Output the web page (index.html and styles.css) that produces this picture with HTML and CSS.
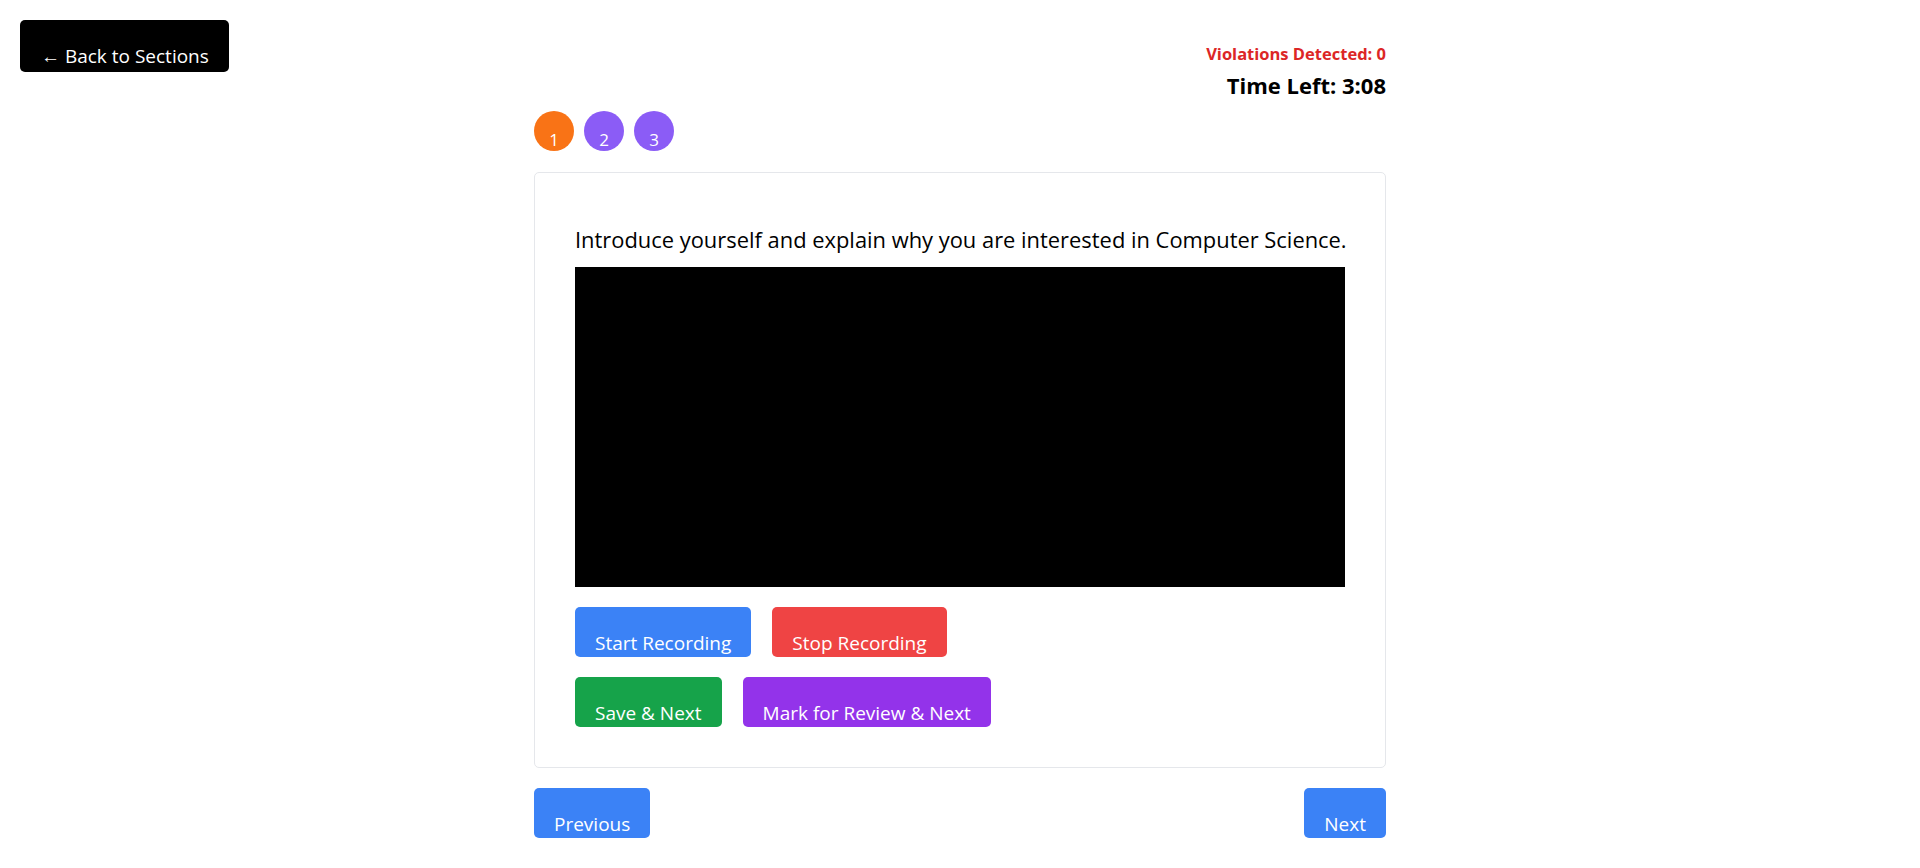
FILE: index.html
```html
<!DOCTYPE html>
<html lang="en">
<head>
<meta charset="utf-8">
<title>Interview Section</title>
<link rel="stylesheet" href="styles.css">
</head>
<body>
<div class="page">
  <div class="side">
    <button class="btn btn-back">← Back to Sections</button>
  </div>
  <main class="main">
    <div class="status">
      <div class="violations">Violations Detected: 0</div>
      <div class="timer">Time Left: 3:08</div>
    </div>
    <div class="steps">
      <span class="step step-active">1</span>
      <span class="step">2</span>
      <span class="step">3</span>
    </div>
    <section class="card">
      <h2 class="question">Introduce yourself and explain why you are interested in Computer Science.</h2>
      <div class="video"></div>
      <div class="btn-row">
        <button class="btn btn-blue">Start Recording</button>
        <button class="btn btn-red">Stop Recording</button>
      </div>
      <div class="btn-row">
        <button class="btn btn-green">Save &amp; Next</button>
        <button class="btn btn-purple">Mark for Review &amp; Next</button>
      </div>
    </section>
    <div class="nav">
      <button class="btn btn-blue">Previous</button>
      <button class="btn btn-blue">Next</button>
    </div>
  </main>
  <div class="side"></div>
</div>
</body>
</html>
```

FILE: styles.css
```css
* { box-sizing: border-box; }
html, body { margin: 0; padding: 0; background: #ffffff; }
body {
  font-family: "Open Sans", "Noto Sans", "Liberation Sans", sans-serif;
  color: #000;
}
.page {
  display: grid;
  grid-template-columns: 1fr 852px 1fr;
  min-height: 868px;
}
.side { padding: 20px; }
.btn {
  font-family: inherit;
  font-size: 19px;
  line-height: 24px;
  color: #fff;
  border: none;
  border-radius: 5px;
  padding: 24px 20px 2px;
  height: 50px;
  cursor: pointer;
  white-space: nowrap;
}
.btn-back {
  background: #000;
  height: 52px;
  padding: 24px 20px 4px 21px;
}
.btn-blue { background: #3b82f6; }
.btn-red { background: #ef4444; }
.btn-green { background: #16a34a; }
.btn-purple { background: #9333ea; }

.main { padding-top: 42px; display: flex; flex-direction: column; }
.status { display: flex; flex-direction: column; align-items: flex-end; }
.violations { color: #dc2626; font-weight: 700; font-size: 16.5px; line-height: 24px; }
.timer { font-weight: 700; font-size: 22px; line-height: 30px; margin-top: 4px; }

.steps { display: flex; gap: 10px; margin-top: 11px; }
.step {
  width: 40px; height: 40px; border-radius: 50%;
  background: #8b5cf6; color: #fff;
  font-size: 17px; line-height: 20px;
  display: flex; justify-content: center; align-items: flex-end;
  padding-bottom: 1px;
}
.step-active { background: #f97316; }

.card {
  margin-top: 21px;
  border: 1px solid #e5e7eb;
  border-radius: 5px;
  padding: 40px;
}
.question {
  margin: 12px 0 12px;
  font-size: 21.9px; line-height: 30px; font-weight: 400;
  white-space: nowrap;
}
.video { height: 320px; background: #000; }
.btn-row { display: flex; gap: 21px; margin-top: 20px; }

.nav { display: flex; justify-content: space-between; margin-top: 20px; }
```
